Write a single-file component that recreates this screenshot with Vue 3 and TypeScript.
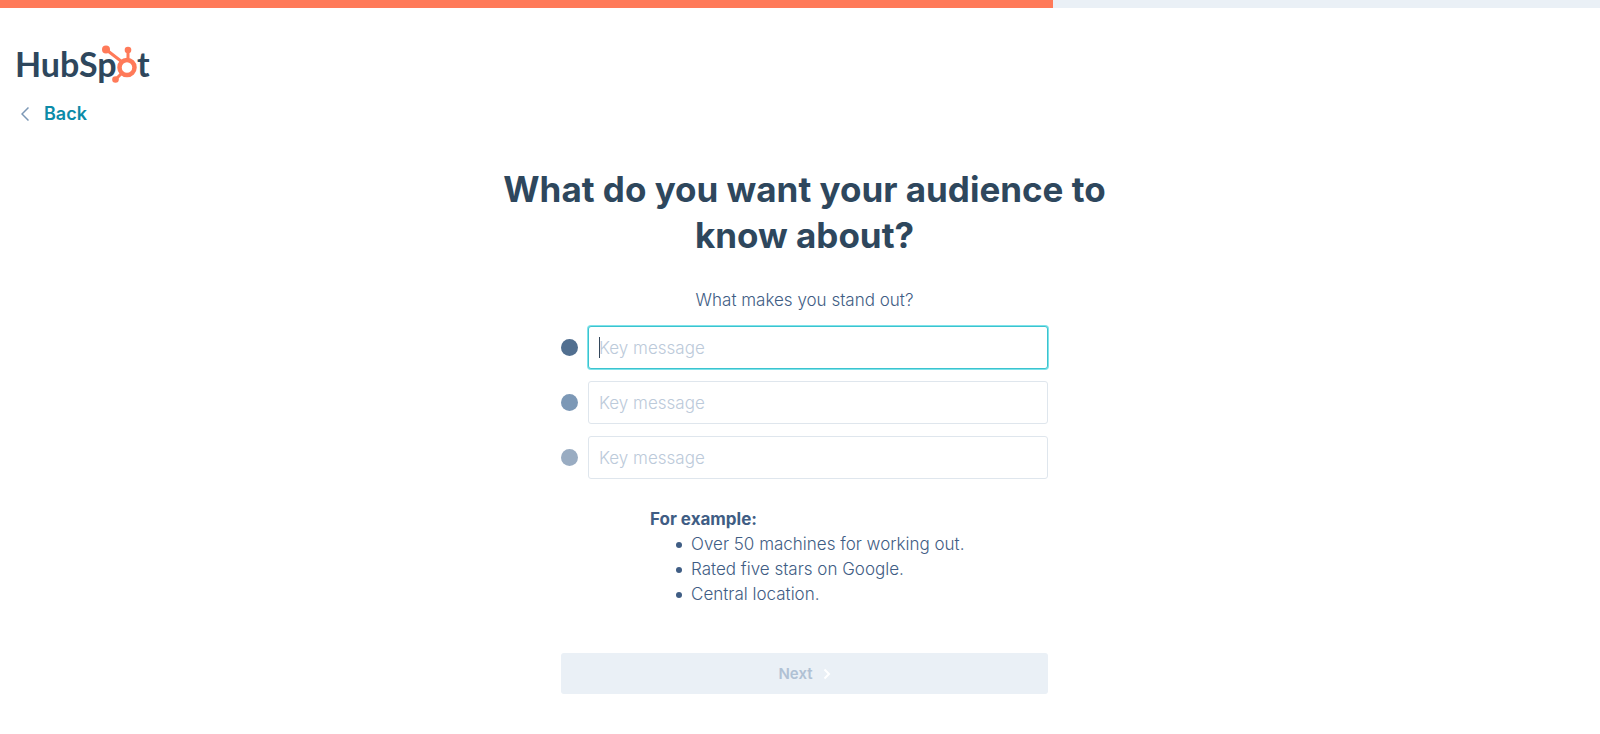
<script setup lang="ts">
import { ref } from 'vue'

interface Message {
  id: string
  label: string
  tone: string
  value: string
}

const progress = ref<number>(65.8)
const messages = ref<Message[]>([
  { id: 'message-1', label: 'First key message', tone: 'dark', value: '' },
  { id: 'message-2', label: 'Second key message', tone: 'medium', value: '' },
  { id: 'message-3', label: 'Third key message', tone: 'light', value: '' },
])
const active = ref<string>('message-1')
const examples: string[] = [
  'Over 50 machines for working out.',
  'Rated five stars on Google.',
  'Central location.',
]
</script>

<template>
  <div class="page">
    <div class="progress" role="progressbar" :aria-valuenow="progress" aria-valuemin="0" aria-valuemax="100">
      <div class="progress-fill" :style="{ width: progress + '%' }"></div>
    </div>

    <header class="top">
      <svg class="logo" width="144" height="50" viewBox="-4 -4 144 50" role="img" aria-label="HubSpot">
        <g class="wordmark">
          <text x="-2" y="33">HubSp</text>
          <text x="120" y="33">t</text>
        </g>
        <g class="sprocket">
          <circle cx="110" cy="23.500" r="7.500" />
          <path d="M89 5.500 L104.500 17.500 M111 6 V15 M105 29 L98.500 35.500" />
          <circle class="node" cx="89" cy="5.500" r="4" />
          <circle class="node" cx="111" cy="6" r="3.300" />
          <circle class="node" cx="98.500" cy="35.500" r="3.300" />
        </g>
      </svg>
      <a class="back" href="#">
        <svg width="8" height="14" viewBox="0 0 8 14" aria-hidden="true">
          <path d="M7.500 0.500 L1 7 L7.500 13.500" />
        </svg>
        Back
      </a>
    </header>

    <main class="content">
      <h1>What do you want your audience to know about?</h1>
      <form class="form" @submit.prevent>
        <p class="subtitle">What makes you stand out?</p>
        <div v-for="message in messages" :key="message.id" class="row">
          <span class="dot" :class="message.tone"></span>
          <div class="field" :class="{ active: active === message.id }">
            <input
              :id="message.id"
              v-model="message.value"
              type="text"
              placeholder="Key message"
              :aria-label="message.label"
              @focus="active = message.id"
            />
            <span v-if="active === message.id && !message.value" class="caret"></span>
          </div>
        </div>
        <section class="examples">
          <h2>For example:</h2>
          <ul>
            <li v-for="example in examples" :key="example">{{ example }}</li>
          </ul>
        </section>
        <button class="next" type="submit" disabled>
          Next
          <svg width="8" height="12" viewBox="0 0 8 12" aria-hidden="true">
            <path d="M1.500 1.500 L6 6 L1.500 10.500" />
          </svg>
        </button>
      </form>
    </main>
  </div>
</template>

<style>
body {
  margin: 0;
  background: #fff;
}
</style>

<style scoped>
.page {
  font-family: Inter, "Liberation Sans", sans-serif;
  font-size: 17px;
  font-weight: 300;
  line-height: 25px;
  color: #3f5d84;
}
.progress {
  height: 8px;
  background: #eaf0f6;
}
.progress-fill {
  height: 100%;
  background: #ff7a59;
}
.top {
  display: flex;
  flex-direction: column;
  align-items: flex-start;
  padding: 32px 13px 0;
}
.logo {
  display: block;
}
.wordmark {
  font-family: Lato, sans-serif;
  font-size: 34px;
  font-weight: 700;
  fill: #2e475d;
}
.sprocket {
  fill: none;
  stroke: #ff7a59;
  stroke-width: 4.5;
}
.sprocket path {
  stroke-width: 3;
}
.sprocket .node {
  fill: #ff7a59;
  stroke: none;
}
.back {
  display: flex;
  align-items: center;
  gap: 15px;
  margin-top: 11px;
  padding-left: 8px;
  font-size: 18px;
  font-weight: 600;
  color: #0c8ba8;
  text-decoration: none;
}
.back svg {
  fill: none;
  stroke: #7c98b6;
  stroke-width: 1.5;
}
.content {
  display: flex;
  flex-direction: column;
  align-items: center;
  padding: 40px 0 40px 9px;
}
h1 {
  max-width: 640px;
  margin: 0;
  font-size: 35px;
  line-height: 46px;
  font-weight: 700;
  color: #2e475d;
  text-align: center;
}
.form {
  width: 100%;
  max-width: 487px;
}
.subtitle {
  margin: 30px 0 13px;
  text-align: center;
}
.row {
  display: flex;
  align-items: center;
  gap: 10px;
  margin-bottom: 12px;
}
.dot {
  width: 17px;
  height: 17px;
  border-radius: 50%;
}
.dark {
  background: #516f90;
}
.medium {
  background: #7c98b6;
}
.light {
  background: #99acc2;
}
.field {
  position: relative;
  flex: 1;
}
input {
  display: block;
  box-sizing: border-box;
  width: 100%;
  height: 43px;
  padding: 0 10px;
  border: 1px solid #dfe6ed;
  border-radius: 3px;
  outline: none;
  background: #fff;
  font: inherit;
  color: #33475b;
  caret-color: transparent;
}
input::placeholder {
  color: #bccada;
  opacity: 1;
}
.active input {
  border-color: #3cc3cf;
  box-shadow: 0 0 0 1px #7fe3ea;
}
.caret {
  position: absolute;
  left: 11px;
  top: 11px;
  width: 1px;
  height: 21px;
  background: #33475b;
}
.examples {
  margin: 28px 0 46px;
  padding-left: 89px;
}
h2 {
  margin: 0;
  font-size: 17px;
  line-height: 25px;
  font-weight: 700;
}
ul {
  margin: 0;
  padding-left: 26px;
  list-style: none;
}
li {
  display: flex;
  align-items: center;
  gap: 9px;
}
li::before {
  content: "";
  width: 6px;
  height: 6px;
  border-radius: 50%;
  background: currentColor;
}
.next {
  display: flex;
  align-items: center;
  justify-content: center;
  gap: 10px;
  width: 100%;
  height: 41px;
  padding: 0;
  border: 0;
  border-radius: 3px;
  background: #eaf0f6;
  font: inherit;
  font-size: 15px;
  font-weight: 600;
  color: #b0c1d4;
}
.next svg {
  fill: none;
  stroke: #fff;
  stroke-width: 2;
}
</style>
